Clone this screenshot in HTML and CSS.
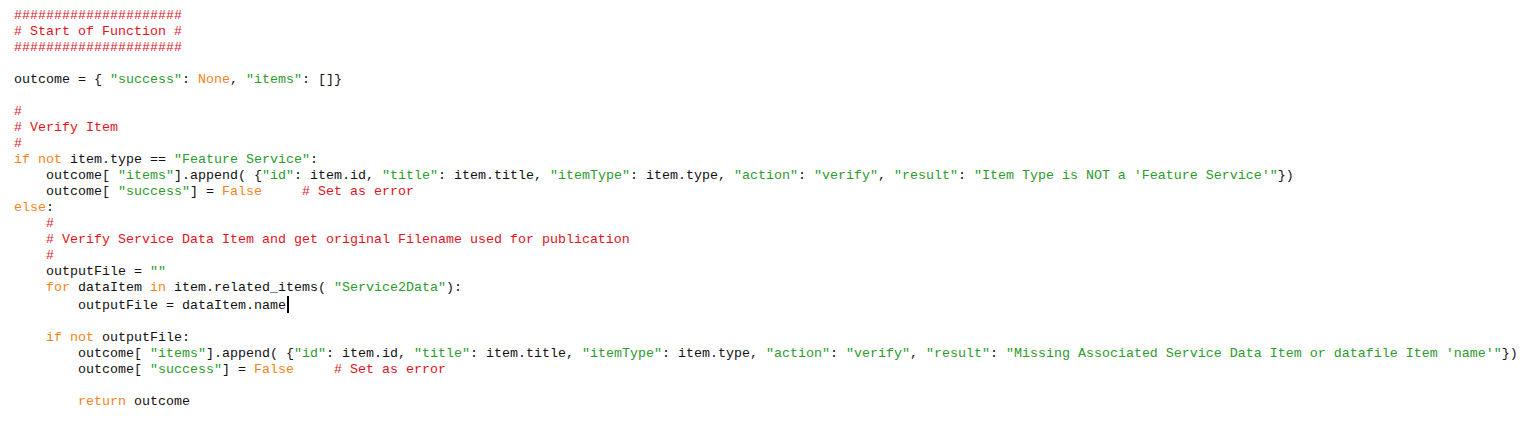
FILE: index.html
```html
<!DOCTYPE html>
<html>
<head>
<meta charset="utf-8">
<link rel="stylesheet" href="styles.css">
</head>
<body>
<pre class="code"><span class="c">#####################</span>
<span class="c"># Start of Function #</span>
<span class="c">#####################</span>

outcome = { <span class="s">"success"</span>: <span class="k">None</span>, <span class="s">"items"</span>: []}

<span class="c">#</span>
<span class="c"># Verify Item</span>
<span class="c">#</span>
<span class="k">if</span> <span class="k">not</span> item.type == <span class="s">"Feature Service"</span>:
    outcome[ <span class="s">"items"</span>].append( {<span class="s">"id"</span>: item.id, <span class="s">"title"</span>: item.title, <span class="s">"itemType"</span>: item.type, <span class="s">"action"</span>: <span class="s">"verify"</span>, <span class="s">"result"</span>: <span class="s">"Item Type is NOT a 'Feature Service'"</span>})
    outcome[ <span class="s">"success"</span>] = <span class="k">False</span>     <span class="c"># Set as error</span>
<span class="k">else</span>:
    <span class="c">#</span>
    <span class="c"># Verify Service Data Item and get original Filename used for publication</span>
    <span class="c">#</span>
    outputFile = <span class="s">""</span>
    <span class="k">for</span> dataItem <span class="k">in</span> item.related_items( <span class="s">"Service2Data"</span>):
        outputFile = dataItem.name<span class="cursor"></span>

    <span class="k">if</span> <span class="k">not</span> outputFile:
        outcome[ <span class="s">"items"</span>].append( {<span class="s">"id"</span>: item.id, <span class="s">"title"</span>: item.title, <span class="s">"itemType"</span>: item.type, <span class="s">"action"</span>: <span class="s">"verify"</span>, <span class="s">"result"</span>: <span class="s">"Missing Associated Service Data Item or datafile Item 'name'"</span>})
        outcome[ <span class="s">"success"</span>] = <span class="k">False</span>     <span class="c"># Set as error</span>

        <span class="k">return</span> outcome

    <span class="c">#</span>
</pre>
</body>
</html>
```
FILE: styles.css
```css
html, body {
  margin: 0;
  padding: 0;
  background: #ffffff;
  overflow: hidden;
}
.code {
  margin: 0;
  padding: 8px 0 0 14px;
  font-family: "Liberation Mono", "Courier New", monospace;
  font-size: 13.333px;
  line-height: 16px;
  color: #111111;
  white-space: pre;
}
.c { color: #e0141e; }
.s { color: #2c9a2c; }
.k { color: #f5841a; }
.cursor {
  display: inline-block;
  width: 2px;
  height: 17px;
  background: #000;
  vertical-align: -4px;
  margin-left: 1px;
}
```
